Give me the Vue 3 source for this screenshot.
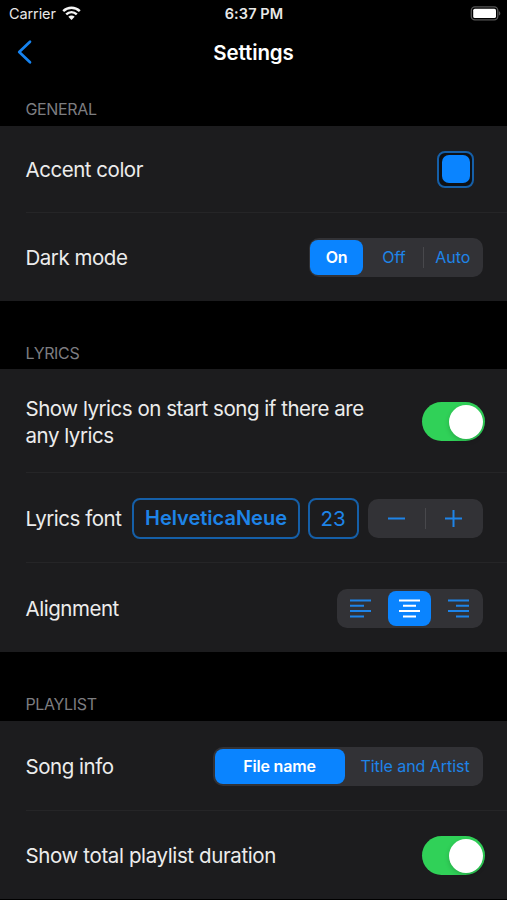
<script setup>
import { ref } from 'vue'

const darkMode = ref('On')
const alignment = ref('center')
const songInfo = ref('File name')
const showLyrics = ref(true)
const showDuration = ref(true)
const fontSize = ref(23)

const alignIcons = [
  { name: 'left', d: 'M0 1.5H21M0 6.8H14M0 12.1H21M0 17.4H14' },
  { name: 'center', d: 'M0 1.5H21M4 6.8H17M0 12.1H21M4 17.4H17' },
  { name: 'right', d: 'M0 1.5H21M8 6.8H21M0 12.1H21M8 17.4H21' },
]
</script>

<template>
  <div class="screen">
    <div class="status">
      <div class="carrier">
        <span class="carrier-name">Carrier</span>
        <svg class="wifi" width="19" height="15" viewBox="0 0 19 15">
          <path d="M1.2 5.2C6 .7 13 .7 17.8 5.2" />
          <path d="M4.2 8.4C7.3 5.5 11.7 5.5 14.8 8.4" />
          <path class="solid" d="M6.3 10.7C8.1 9.1 10.9 9.1 12.7 10.7L9.5 14Z" />
        </svg>
      </div>
      <span class="time">6:37 PM</span>
      <div class="battery-slot">
        <svg width="31" height="15" viewBox="0 0 31 15">
          <rect class="shell" x="1.3" y=".9" width="26.5" height="13" rx="3.6" />
          <rect class="charge" x="3.2" y="2.7" width="22.8" height="9.4" rx="1.6" />
          <path class="cap" d="M28.8 5.2C30.8 5.8 30.8 9 28.8 9.6Z" />
        </svg>
      </div>
    </div>

    <header class="navbar">
      <button class="back" aria-label="Back">
        <svg width="16" height="26" viewBox="0 0 16 26"><path d="M14 2.8L3.2 13L14 23.2" /></svg>
      </button>
      <h1>Settings</h1>
    </header>

    <h2 class="general">GENERAL</h2>
    <section class="card">
      <div class="row accent-row">
        <span>Accent color</span>
        <button class="swatch" aria-label="Accent color"><i></i></button>
      </div>
      <div class="row dark-row">
        <span>Dark mode</span>
        <div class="segments dark-segments">
          <button
            v-for="mode in ['On', 'Off', 'Auto']"
            :key="mode"
            :class="{ selected: darkMode === mode, ruled: mode === 'Auto' && darkMode === 'On' }"
            @click="darkMode = mode"
          >{{ mode }}</button>
        </div>
      </div>
    </section>

    <h2 class="lyrics">LYRICS</h2>
    <section class="card">
      <div class="row show-row">
        <span>Show lyrics on start song if there are<br>any lyrics</span>
        <button class="toggle" :class="{ on: showLyrics }" @click="showLyrics = !showLyrics"><i></i></button>
      </div>
      <div class="row font-row">
        <span>Lyrics font</span>
        <div class="font-controls">
          <button class="outlined family">HelveticaNeue</button>
          <button class="outlined size">{{ fontSize }}</button>
          <div class="stepper">
            <button aria-label="Smaller" @click="fontSize--">
              <svg width="19" height="19" viewBox="0 0 19 19"><path d="M1 9.5H18" /></svg>
            </button>
            <button class="ruled" aria-label="Larger" @click="fontSize++">
              <svg width="19" height="19" viewBox="0 0 19 19"><path d="M1 9.5H18M9.5 1V18" /></svg>
            </button>
          </div>
        </div>
      </div>
      <div class="row align-row">
        <span>Alignment</span>
        <div class="segments align-segments">
          <button
            v-for="icon in alignIcons"
            :key="icon.name"
            :class="{ selected: alignment === icon.name }"
            :aria-label="icon.name"
            @click="alignment = icon.name"
          >
            <svg width="21" height="19" viewBox="0 0 21 19"><path :d="icon.d" /></svg>
          </button>
        </div>
      </div>
    </section>

    <h2 class="playlist">PLAYLIST</h2>
    <section class="card">
      <div class="row info-row">
        <span>Song info</span>
        <div class="segments info-segments">
          <button
            v-for="kind in ['File name', 'Title and Artist']"
            :key="kind"
            :class="{ selected: songInfo === kind }"
            @click="songInfo = kind"
          >{{ kind }}</button>
        </div>
      </div>
      <div class="row total-row">
        <span>Show total playlist duration</span>
        <button class="toggle" :class="{ on: showDuration }" @click="showDuration = !showDuration"><i></i></button>
      </div>
    </section>
  </div>
</template>

<style>
body {
  background: #000;
}
</style>

<style scoped>
* {
  box-sizing: border-box;
}
.screen {
  width: 507px;
  height: 900px;
  overflow: hidden;
  background: #000;
  color: #ececec;
  font-family: Inter, "Liberation Sans", sans-serif;
}
button {
  display: flex;
  align-items: center;
  justify-content: center;
  padding: 0;
  border: 0;
  background: none;
  color: #1e84e8;
  font: inherit;
  letter-spacing: inherit;
  white-space: nowrap;
}
svg {
  display: block;
  fill: none;
}
.status {
  display: grid;
  grid-template-columns: 1fr auto 1fr;
  height: 27px;
  padding: 0 6px 0 9px;
  align-items: center;
  color: #e8e8e8;
  font-size: 14.5px;
}
.carrier {
  display: flex;
  align-items: center;
  gap: 6px;
}
.carrier-name {
  letter-spacing: -0.1px;
}
.wifi {
  stroke: #f5f5f5;
  stroke-width: 2.5;
}
.wifi .solid {
  fill: #f5f5f5;
  stroke: none;
}
.time {
  margin-right: 2px;
  font-weight: 600;
  font-size: 14.5px;
  letter-spacing: 0.1px;
}
.battery-slot {
  display: flex;
  justify-content: flex-end;
}
.shell {
  stroke: #565656;
  stroke-width: 1.3;
}
.charge {
  fill: #fff;
}
.cap {
  fill: #565656;
}
.navbar {
  display: grid;
  grid-template-columns: 1fr auto 1fr;
  align-items: center;
  height: 50px;
  padding: 0 15px;
}
.back {
  justify-self: start;
  padding-left: 1px;
}
.back path {
  stroke: #1683f0;
  stroke-width: 2.7;
  stroke-linecap: round;
  stroke-linejoin: round;
}
h1 {
  margin: 0;
  color: #fff;
  font-size: 20.5px;
  font-weight: 600;
  letter-spacing: -0.1px;
}
h2 {
  display: flex;
  align-items: flex-end;
  margin: 0;
  padding: 0 25.5px 7px;
  color: #7d7d80;
  font-size: 16px;
  font-weight: 400;
  letter-spacing: -0.35px;
  line-height: 20px;
}
.general {
  height: 49px;
}
.lyrics {
  height: 68px;
  padding-bottom: 6px;
}
.playlist {
  height: 69px;
}
.card {
  background: #1c1c1e;
}
.row {
  display: flex;
  align-items: center;
  justify-content: space-between;
  padding: 2px 24.5px 0 25.5px;
  font-size: 20.5px;
  letter-spacing: -0.47px;
  line-height: 27px;
  white-space: nowrap;
}
.row + .row {
  background: linear-gradient(#252527, #252527) 26px 0 / 481px 1px no-repeat;
}
.accent-row {
  height: 86px;
  padding-top: 0;
  padding-right: 33px;
}
.accent-row span {
  padding-top: 1px;
}
.dark-row {
  height: 89px;
}
.show-row {
  height: 103px;
  padding-right: 22px;
}
.font-row {
  height: 90px;
}
.align-row {
  height: 90px;
}
.info-row {
  height: 89px;
}
.total-row {
  height: 89px;
  padding-right: 22px;
  letter-spacing: -0.38px;
}
.swatch {
  width: 37px;
  height: 37px;
  border: 2px solid #155fa8;
  border-radius: 8px;
  background: #0e1116;
}
.swatch i {
  width: 28px;
  height: 28px;
  border-radius: 7px;
  background: #0a84ff;
}
.segments {
  display: grid;
  height: 39px;
  padding: 2px;
  border-radius: 10px;
  background: #323236;
  font-size: 16px;
  letter-spacing: -0.05px;
}
.selected {
  border-radius: 8px;
  background: #0a84ff;
  color: #fff;
  font-weight: 600;
  letter-spacing: -0.2px;
}
.ruled {
  background: linear-gradient(#48484c, #48484c) 0 50% / 1px 21px no-repeat;
}
.dark-segments {
  grid-template-columns: 53px 60px 1fr;
  width: 174px;
  padding-left: 1.5px;
}
.dark-segments button:not(.selected) {
  padding-left: 2px;
}
.toggle {
  width: 63px;
  height: 39px;
  padding: 0 2px;
  border-radius: 20px;
  background: #39393d;
  justify-content: flex-start;
}
.toggle.on {
  background: #30d158;
  justify-content: flex-end;
}
.toggle i {
  width: 34px;
  height: 34px;
  border-radius: 50%;
  background: #fff;
  box-shadow: 0 2px 5px rgba(0, 0, 0, 0.18);
}
.font-controls {
  display: flex;
  align-items: center;
  gap: 8px;
}
.outlined {
  height: 41px;
  border: 2px solid #155fa8;
  border-radius: 8px;
}
.family {
  width: 168px;
  padding: 1px 0 0 1px;
  font-weight: 600;
  font-size: 20px;
  letter-spacing: 0;
}
.size {
  width: 51px;
  letter-spacing: -0.2px;
}
.stepper {
  display: grid;
  grid-template-columns: 1fr 1fr;
  width: 115px;
  height: 39px;
  margin-left: 1px;
  border-radius: 10px;
  background: #323236;
}
.stepper path,
.align-segments path {
  stroke: #1e84e8;
  stroke-width: 2;
}
.align-segments {
  grid-template-columns: repeat(3, 43px);
  column-gap: 6px;
  justify-content: center;
  width: 146px;
}
.align-segments .selected path {
  stroke: #fff;
}
.info-segments {
  grid-template-columns: 130px 1fr;
  width: 270px;
}
.info-segments button:last-child {
  padding-left: 5px;
}
</style>
